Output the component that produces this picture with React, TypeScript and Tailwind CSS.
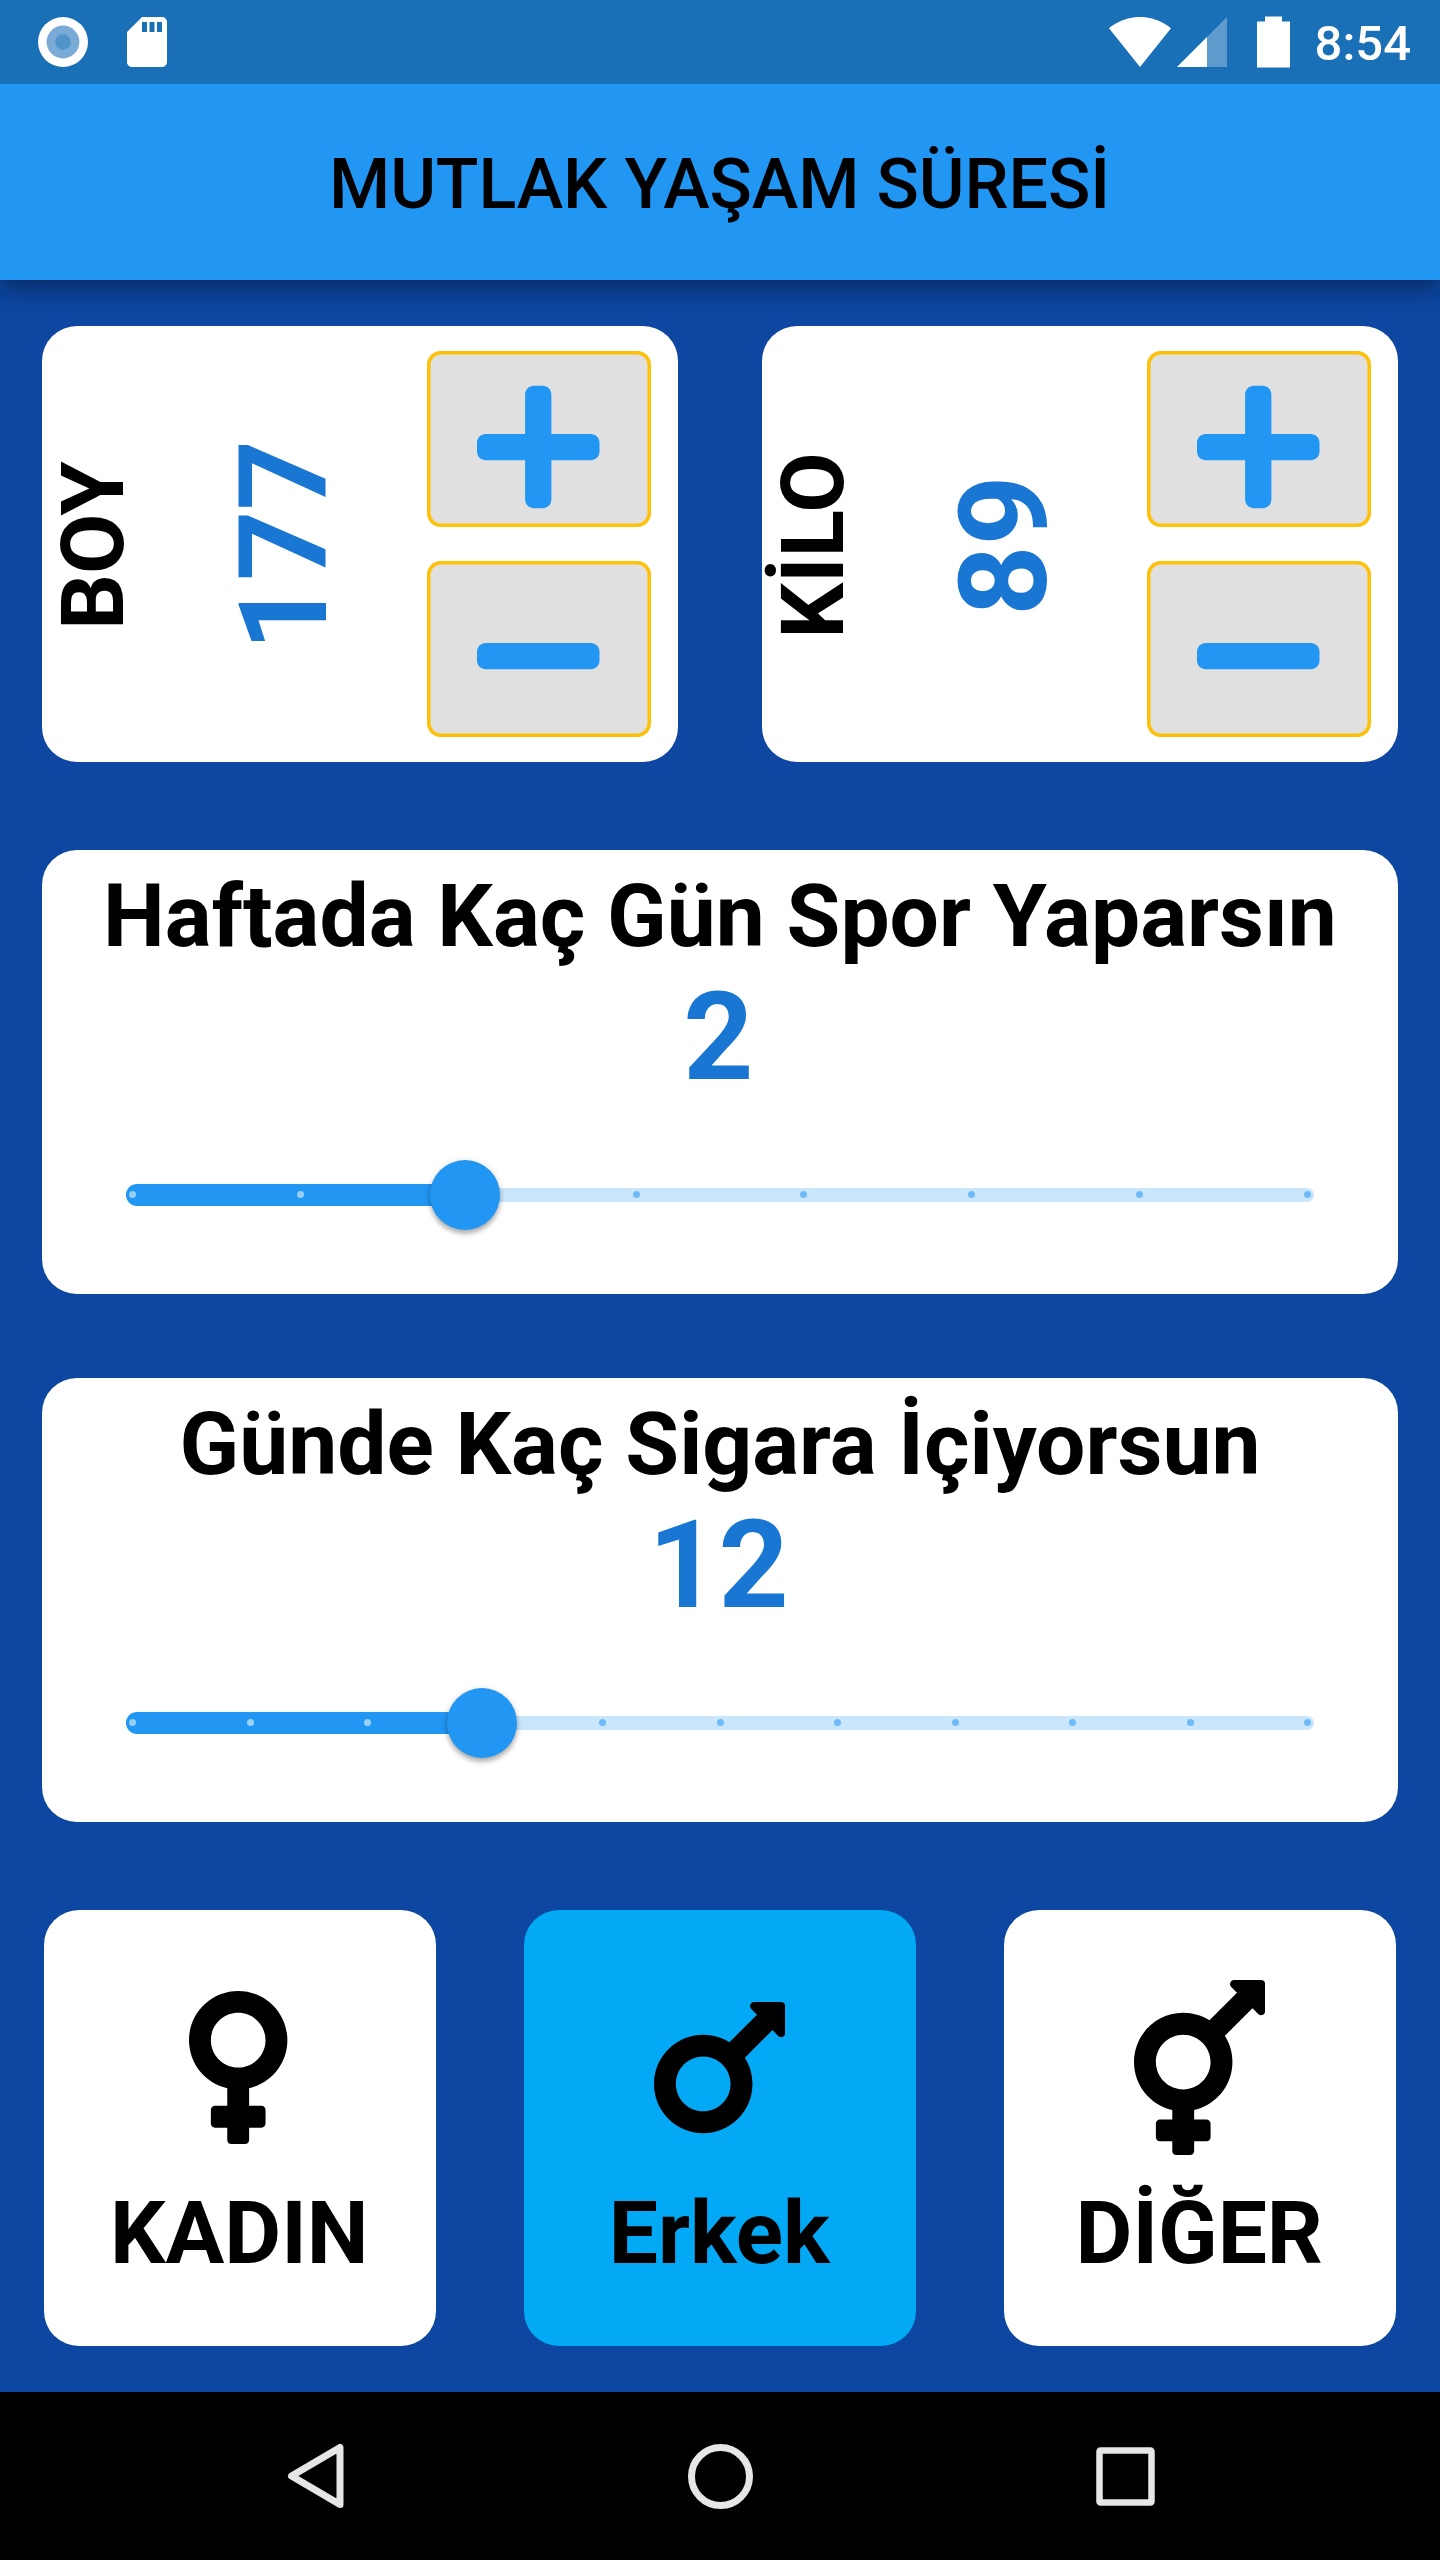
import type { ReactNode } from "react";
import { FaMars, FaMinus, FaPlus, FaTransgender, FaVenus } from "react-icons/fa";

function StatusBar() {
  return (
    <div className="flex h-[84px] items-center bg-[#1970B6] pl-[38px] pr-[29px]">
      <svg className="h-[50px] w-[50px]" viewBox="0 0 50 50">
        <circle cx="25" cy="25" r="25" fill="#fff" />
        <circle cx="25" cy="25" r="16.4" fill="#7AABD6" />
        <circle cx="25" cy="25" r="7.8" fill="#4F94CA" />
      </svg>
      <svg className="ml-[29px] h-[60px] w-[60px]" viewBox="0 0 24 24" fill="#fff">
        <path d="M18 2h-8L4 8v12c0 1.1.9 2 2 2h12c1.1 0 2-.9 2-2V4c0-1.1-.9-2-2-2zm-6 6h-2V4h2v4zm3 0h-2V4h2v4zm3 0h-2V4h2v4z" />
      </svg>
      <svg className="ml-auto h-[50px] w-[62px]" viewBox="0 0 62 50" fill="#fff">
        <path d="M31 50 L62 11.2 C60.8 10.2 49 0 31 0 C13 0 1.2 10.2 0 11.2 Z" />
      </svg>
      <svg className="ml-[6px] h-[50px] w-[50px]" viewBox="0 0 50 50" fill="#fff">
        <path d="M0 50 L50 0 V50 Z" fillOpacity="0.3" />
        <path d="M0 50 L30 20 V50 Z" />
      </svg>
      <svg className="ml-[30px] h-[52px] w-[33px]" viewBox="0 0 33 52" fill="#fff">
        <path d="M8 0.5 H25 V5.5 H33 V51.5 H0 V5.5 H8 Z" />
      </svg>
      <span className="ml-[25px] pt-[4px] text-[49px] font-medium leading-[58px] text-white">8:54</span>
    </div>
  );
}

function RotatedText({ box, text, children }: { box: string; text: string; children: ReactNode }) {
  return (
    <div className={`flex h-full shrink-0 items-center justify-center pt-[3px] ${box}`}>
      <span className={`shrink-0 -rotate-90 whitespace-nowrap font-bold ${text}`}>{children}</span>
    </div>
  );
}

function StepButton({ children }: { children: ReactNode }) {
  return (
    <button className="flex h-[175.6px] w-[224px] items-center justify-center rounded-[14px] bg-[#E0E0E0] pr-[1px] pt-[15px] text-[#2196F3] shadow-[inset_0_0_0_3.5px_#FFC107]">
      {children}
    </button>
  );
}

function Stepper({ label, value }: { label: string; value: number }) {
  return (
    <div className="flex h-[436px] w-[636px] items-center rounded-[35px] bg-white pr-[27px]">
      <RotatedText box="w-[103px]" text="text-[87.5px] leading-[103px] text-black">{label}</RotatedText>
      <RotatedText box="ml-[68px] w-[143px]" text="text-[122.5px] leading-[143px] text-[#1976D2]">{value}</RotatedText>
      <div className="ml-auto flex flex-col gap-[34.4px]">
        <StepButton>
          <FaPlus className="h-[140px] w-[122.5px]" />
        </StepButton>
        <StepButton>
          <FaMinus className="h-[140px] w-[122.5px]" />
        </StepButton>
      </div>
    </div>
  );
}

function DiscreteSlider({ value, divisions }: { value: number; divisions: number }) {
  const percent = value * 100;
  return (
    <div className="relative mx-[84px] flex h-[168px] items-center">
      <div className="h-[14px] w-full rounded-full bg-[#CAE6FC]" />
      <div className="absolute left-0 h-[21.5px] rounded-l-full bg-[#2196F3]" style={{ width: `${percent}%` }} />
      <div className="absolute inset-x-[3px] -mt-px flex justify-between">
        {Array.from({ length: divisions + 1 }, (_, i) => (
          <span
            key={i}
            className={`h-[7px] w-[7px] rounded-full ${i / divisions <= value + 0.001 ? "bg-[#9ACFFA]" : "bg-[#6FBBF8]"}`}
          />
        ))}
      </div>
      <div
        className="absolute h-[70px] w-[70px] -translate-x-1/2 rounded-full bg-[#2196F3] shadow-[0_4px_5px_rgba(0,0,0,0.25),0_1px_6px_rgba(0,0,0,0.14)]"
        style={{ left: `${percent}%` }}
      />
    </div>
  );
}

function SliderCard({ title, label, value, divisions }: { title: string; label: string; value: number; divisions: number }) {
  return (
    <div className="m-[42px] flex h-[444px] flex-col justify-center rounded-[35px] bg-white">
      <div className="whitespace-nowrap text-center text-[87.5px] font-bold leading-[103px] text-black">{title}</div>
      <div className="mb-[4px] pr-[3px] text-center text-[122.5px] font-bold leading-[139px] text-[#1976D2]">{label}</div>
      <DiscreteSlider value={value} divisions={divisions} />
    </div>
  );
}

function GenderCard({ tone, icon, children }: { tone: string; icon: ReactNode; children: ReactNode }) {
  return (
    <div className={`flex h-[436px] w-[391.4px] flex-col items-center rounded-[35px] pt-[70px] ${tone}`}>
      {icon}
      <div className="mt-[27px] whitespace-nowrap pr-[1.5px] text-[87.5px] font-bold leading-[103px] text-black">{children}</div>
    </div>
  );
}

function NavBar() {
  return (
    <div className="flex h-[168px] items-center bg-black pl-[284px]">
      <svg className="h-[72px] w-[64px]" viewBox="0 0 64 72" fill="none" stroke="#E6E6E6" strokeWidth="7" strokeLinejoin="round">
        <path d="M56 7.5 V64.5 L7.5 36 Z" />
      </svg>
      <svg className="ml-[340px] h-[65px] w-[65px]" viewBox="0 0 65 65" fill="none" stroke="#E6E6E6" strokeWidth="7">
        <circle cx="32.5" cy="32.5" r="29" />
      </svg>
      <svg className="ml-[343px] h-[59px] w-[59px]" viewBox="0 0 59 59" fill="none" stroke="#E6E6E6" strokeWidth="6.5" strokeLinejoin="round">
        <rect x="3.5" y="3.5" width="52" height="52" rx="1" />
      </svg>
    </div>
  );
}

export default function App() {
  return (
    <div className="flex h-[2560px] w-[1440px] flex-col overflow-hidden bg-[#0D47A1] font-[Roboto,sans-serif]">
      <div className="shadow-[0_7px_14px_-3px_rgba(0,0,0,0.2),0_14px_18px_rgba(0,0,0,0.14),0_3px_35px_rgba(0,0,0,0.12)]">
        <StatusBar />
        <header className="flex h-[196px] items-center justify-center bg-[#2196F3] pr-[1px] pt-[4px]">
          <h1 className="text-[70px] font-medium leading-[82px] tracking-[-0.1px] text-black">MUTLAK YAŞAM SÜRESİ</h1>
        </header>
      </div>

      <main className="flex flex-col">
        <section className="flex h-[528px] items-center justify-around">
          <Stepper label="BOY" value={177} />
          <Stepper label="KİLO" value={89} />
        </section>
        <section className="flex h-[528px] flex-col">
          <SliderCard title="Haftada Kaç Gün Spor Yaparsın" label="2" value={2 / 7} divisions={7} />
        </section>
        <section className="flex h-[528px] flex-col">
          <SliderCard title="Günde Kaç Sigara İçiyorsun" label="12" value={0.3} divisions={10} />
        </section>
        <section className="flex h-[528px] items-center justify-around">
          <GenderCard tone="bg-white" icon={<FaVenus className="mr-[3px] h-[175px] w-[98.4px]" />}>
            KADIN
          </GenderCard>
          <GenderCard tone="bg-[#03A9F4]" icon={<FaMars className="mr-[1px] h-[175px] w-[131.25px]" />}>
            Erkek
          </GenderCard>
          <GenderCard tone="bg-white" icon={<FaTransgender className="mr-[1px] h-[175px] w-[131.25px]" />}>
            DİĞER
          </GenderCard>
        </section>
      </main>

      <NavBar />
    </div>
  );
}
